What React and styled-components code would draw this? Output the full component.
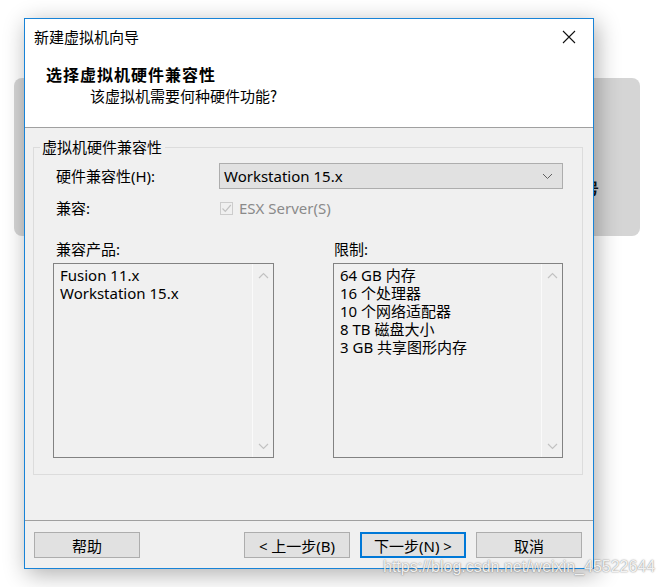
import React from "react"
import styled, { createGlobalStyle } from "styled-components"

const GlobalStyle = createGlobalStyle`
  html, body {
    margin: 0;
    padding: 0;
    background: #ffffff;
  }
  body {
    font-family: "Noto Sans", "Noto Sans CJK SC", sans-serif;
    color: #000;
  }
`

const compatible = ["Fusion 11.x", "Workstation 15.x"]
const limits = ["64 GB 内存", "16 个处理器", "10 个网络适配器", "8 TB 磁盘大小", "3 GB 共享图形内存"]

const Chevron = ({ up }) => (
  <svg width="11" height="7" viewBox="0 0 11 7">
    <path
      d={up ? "M1 6 L5.5 1.5 L10 6" : "M1 1 L5.5 5.5 L10 1"}
      fill="none"
      stroke="#c2c2c2"
      strokeWidth="1.2"
    />
  </svg>
)

const ListBox = ({ items, width }) => (
  <List style={{ width }}>
    <ListItems>
      {items.map((item) => (
        <li key={item}>{item}</li>
      ))}
    </ListItems>
    <ScrollBar>
      <Chevron up />
      <Chevron />
    </ScrollBar>
  </List>
)

const App = () => {
  return (
    <Page>
      <GlobalStyle />
      <BackCard>
        <BackText>号</BackText>
      </BackCard>
      <Window>
        <TitleBar>
          <span>新建虚拟机向导</span>
          <CloseButton>
            <svg width="14" height="14" viewBox="0 0 14 14">
              <path d="M1 1 L13 13 M13 1 L1 13" stroke="#111" strokeWidth="1.1" />
            </svg>
          </CloseButton>
        </TitleBar>
        <Header>
          <HeaderTitle>选择虚拟机硬件兼容性</HeaderTitle>
          <HeaderSub>该虚拟机需要何种硬件功能?</HeaderSub>
        </Header>
        <Body>
          <Group>
            <Legend>虚拟机硬件兼容性</Legend>
            <FormGrid>
              <Label>硬件兼容性(H):</Label>
              <Select>
                <span>Workstation 15.x</span>
                <svg width="11" height="7" viewBox="0 0 11 7">
                  <path d="M1 1 L5.5 5.5 L10 1" fill="none" stroke="#606060" strokeWidth="1" />
                </svg>
              </Select>
              <Label>兼容:</Label>
              <CheckRow>
                <CheckBox>
                  <svg width="11" height="11" viewBox="0 0 11 11">
                    <path d="M1.5 5.5 L4.3 8.3 L9.8 2" fill="none" stroke="#c2c2c2" strokeWidth="1.2" />
                  </svg>
                </CheckBox>
                <span>ESX Server(S)</span>
              </CheckRow>
            </FormGrid>
            <Lists>
              <ListColumn>
                <ListLabel>兼容产品:</ListLabel>
                <ListBox items={compatible} width={221} />
              </ListColumn>
              <ListColumn>
                <ListLabel $right>限制:</ListLabel>
                <ListBox items={limits} width={230} />
              </ListColumn>
            </Lists>
          </Group>
        </Body>
        <Footer>
          <Button>帮助</Button>
          <Spacer />
          <Button>&lt; 上一步(B)</Button>
          <Button $primary>下一步(N) &gt;</Button>
          <Button>取消</Button>
        </Footer>
      </Window>
      <Watermark>https://blog.csdn.net/weixin_45522644</Watermark>
    </Page>
  )
}
export default App

const Page = styled.div`
  position: relative;
  display: grid;
  width: 659px;
  height: 587px;
  overflow: hidden;
  grid-template-columns: 1fr;
  grid-template-rows: 1fr;
`

const BackCard = styled.div`
  grid-row: 1 / 2;
  grid-column: 1 / 2;
  margin: 78px 0 0 14px;
  width: 626px;
  height: 158px;
  box-sizing: border-box;
  border-radius: 8px;
  background: #d5d5d5;
  padding: 102px 0 0 570px;
`

const BackText = styled.div`
  font-family: "Noto Sans CJK SC", sans-serif;
  font-size: 15px;
  font-weight: 700;
  line-height: 16px;
  color: #111;
`

const Window = styled.div`
  grid-row: 1 / 2;
  grid-column: 1 / 2;
  position: relative;
  margin: 18px 0 0 24px;
  width: 570px;
  height: 551px;
  box-sizing: border-box;
  border: 1px solid #1883d7;
  background: #f0f0f0;
  display: flex;
  flex-direction: column;
  box-shadow: 3px 5px 22px rgba(0, 0, 0, 0.32);
`

const TitleBar = styled.div`
  height: 36px;
  background: #ffffff;
  display: flex;
  align-items: center;
  justify-content: space-between;
  padding: 0 0 0 9px;
  font-family: "Noto Sans CJK SC", sans-serif;
  font-size: 15px;
  span {
    line-height: 20px;
  }
`

const CloseButton = styled.div`
  width: 46px;
  height: 36px;
  display: flex;
  align-items: center;
  justify-content: center;
  margin-right: 1px;
`

const Header = styled.div`
  background: #ffffff;
  padding: 9px 0 21px 21px;
  border-bottom: 1px solid #a0a0a0;
  font-family: "Noto Sans CJK SC", sans-serif;
`

const HeaderTitle = styled.div`
  font-size: 16px;
  font-weight: 700;
  letter-spacing: 1px;
  line-height: 20px;
`

const HeaderSub = styled.div`
  font-size: 15px;
  line-height: 20px;
  margin-top: 2px;
  padding-left: 44px;
`

const Body = styled.div`
  flex: 1;
  padding: 9px 10px 0 8px;
`

const Group = styled.fieldset`
  margin: 0;
  padding: 0 0 16px 0;
  border: 1px solid #dcdcdc;
  min-width: 0;
`

const Legend = styled.legend`
  margin-left: 6px;
  padding: 0 3px 0 2px;
  font-family: "Noto Sans CJK SC", sans-serif;
  font-size: 15px;
  line-height: 20px;
`

const FormGrid = styled.div`
  display: grid;
  grid-template-columns: 163px 344px;
  grid-auto-rows: 26px;
  row-gap: 6px;
  align-items: center;
  padding: 6px 0 0 22px;
`

const Label = styled.div`
  font-size: 15px;
  line-height: 20px;
`

const Select = styled.div`
  height: 26px;
  box-sizing: border-box;
  border: 1px solid #adadad;
  background: #e1e1e1;
  display: flex;
  align-items: center;
  justify-content: space-between;
  padding: 0 9px 0 4px;
  font-size: 15px;
`

const CheckRow = styled.div`
  display: flex;
  align-items: center;
  gap: 6px;
  color: #8a8a8a;
  font-size: 15px;
  padding-left: 1px;
`

const CheckBox = styled.div`
  width: 13px;
  height: 13px;
  box-sizing: border-box;
  border: 1px solid #cccccc;
  display: flex;
  align-items: center;
  justify-content: center;
`

const Lists = styled.div`
  display: grid;
  grid-template-columns: 221px 230px;
  column-gap: 59px;
  padding: 18px 0 0 19px;
`

const ListColumn = styled.div`
  display: flex;
  flex-direction: column;
  gap: 4px;
`

const ListLabel = styled.div`
  font-size: 15px;
  line-height: 20px;
  padding-left: ${(p) => (p.$right ? "1px" : "3px")};
`

const List = styled.div`
  height: 195px;
  box-sizing: border-box;
  border: 1px solid #828282;
  background: #f0f0f0;
  display: flex;
`

const ListItems = styled.ul`
  flex: 1;
  list-style: none;
  margin: 0;
  padding: 2px 0 0 6px;
  font-size: 15px;
  line-height: 18px;
`

const ScrollBar = styled.div`
  width: 20px;
  border-left: 1px solid #fafafa;
  display: flex;
  flex-direction: column;
  justify-content: space-between;
  align-items: center;
  padding: 8px 0 7px;
`

const Footer = styled.div`
  border-top: 1px solid #a0a0a0;
  padding: 11px 11px 10px 9px;
  display: flex;
  gap: 10px;
`

const Spacer = styled.div`
  flex: 1;
`

const Button = styled.div`
  width: 106px;
  height: 26px;
  box-sizing: border-box;
  border: ${(p) => (p.$primary ? "2px solid #0078d7" : "1px solid #adadad")};
  background: #e1e1e1;
  display: flex;
  align-items: center;
  justify-content: center;
  font-family: "Noto Sans", "Noto Sans CJK SC", sans-serif;
  font-size: 15px;
`

const Watermark = styled.div`
  position: absolute;
  left: 383px;
  top: 558px;
  font-family: "Liberation Sans", sans-serif;
  font-size: 16px;
  color: rgba(255, 255, 255, 0.9);
  text-shadow: 0 0 2px rgba(0, 0, 0, 0.35), 0 0 1px rgba(0, 0, 0, 0.3);
  white-space: nowrap;
`
